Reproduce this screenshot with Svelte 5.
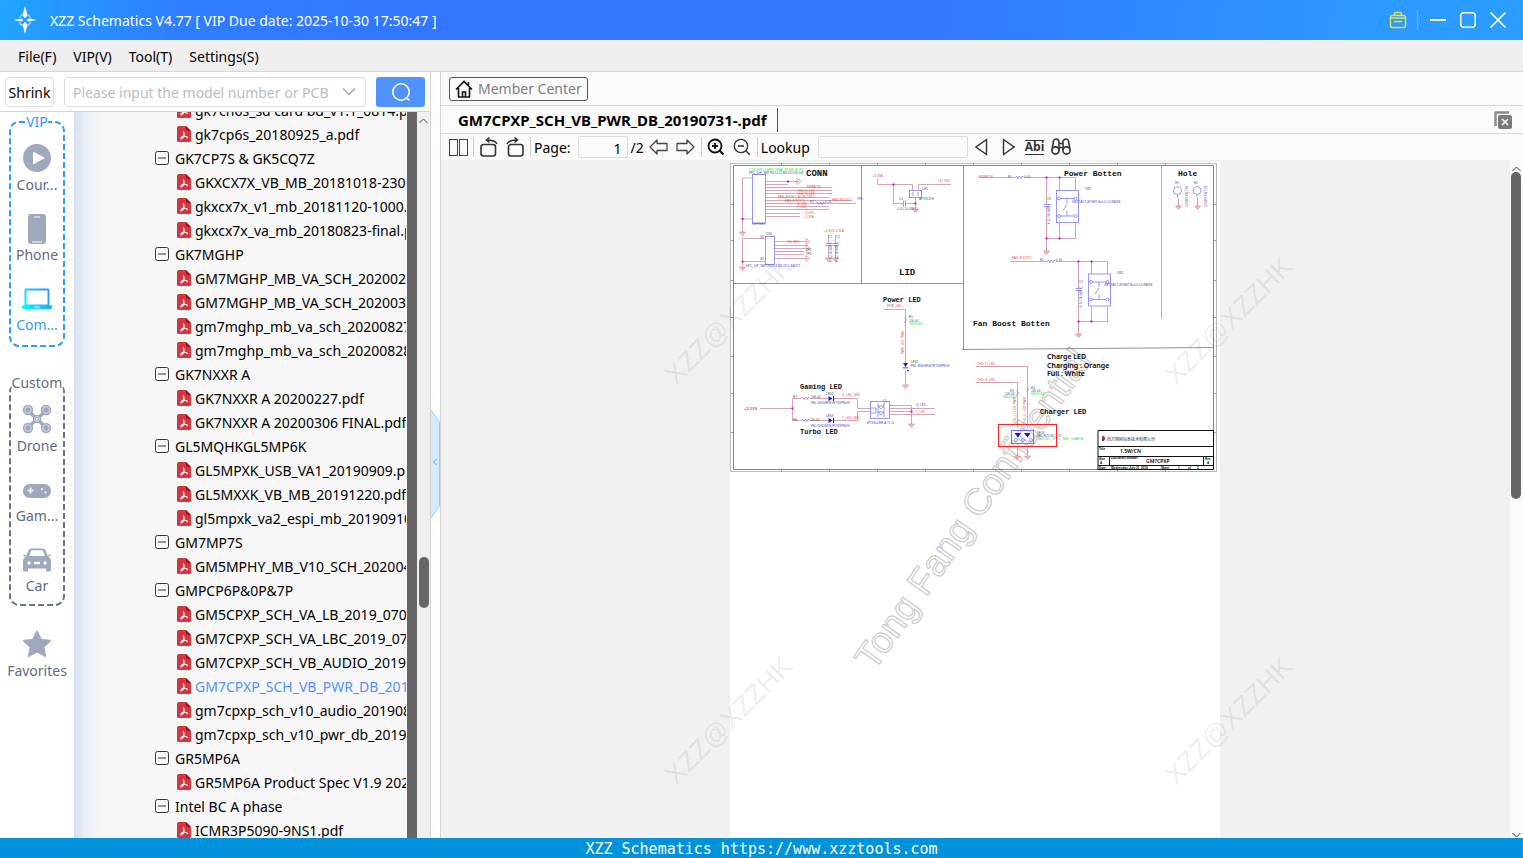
<script>
  const menus = ['File(F)', 'VIP(V)', 'Tool(T)', 'Settings(S)'];

  const tree = [
    { file: 'gk7cn6s_sd card bd_v1.1_0814.pdf' },
    { file: 'gk7cp6s_20180925_a.pdf' },
    { dir: 'GK7CP7S & GK5CQ7Z' },
    { file: 'GKXCX7X_VB_MB_20181018-230.pdf' },
    { file: 'gkxcx7x_v1_mb_20181120-1000.pdf' },
    { file: 'gkxcx7x_va_mb_20180823-final.pdf' },
    { dir: 'GK7MGHP' },
    { file: 'GM7MGHP_MB_VA_SCH_20200220.pdf' },
    { file: 'GM7MGHP_MB_VA_SCH_20200309.pdf' },
    { file: 'gm7mghp_mb_va_sch_20200827.pdf' },
    { file: 'gm7mghp_mb_va_sch_20200828.pdf' },
    { dir: 'GK7NXXR A' },
    { file: 'GK7NXXR A 20200227.pdf' },
    { file: 'GK7NXXR A 20200306 FINAL.pdf' },
    { dir: 'GL5MQHKGL5MP6K' },
    { file: 'GL5MPXK_USB_VA1_20190909.pdf' },
    { file: 'GL5MXXK_VB_MB_20191220.pdf' },
    { file: 'gl5mpxk_va2_espi_mb_20190910.pdf' },
    { dir: 'GM7MP7S' },
    { file: 'GM5MPHY_MB_V10_SCH_20200420.pdf' },
    { dir: 'GMPCP6P&0P&7P' },
    { file: 'GM5CPXP_SCH_VA_LB_2019_0704.pdf' },
    { file: 'GM7CPXP_SCH_VA_LBC_2019_0704.pdf' },
    { file: 'GM7CPXP_SCH_VB_AUDIO_20190731.pdf' },
    { file: 'GM7CPXP_SCH_VB_PWR_DB_20190731-.pdf', active: true },
    { file: 'gm7cpxp_sch_v10_audio_20190806.pdf' },
    { file: 'gm7cpxp_sch_v10_pwr_db_20190806.pdf' },
    { dir: 'GR5MP6A' },
    { file: 'GR5MP6A Product Spec V1.9 2020.pdf' },
    { dir: 'Intel BC A phase' },
    { file: 'ICMR3P5090-9NS1.pdf' }
  ];

  const groups = [
    { name: 'VIP', blue: true, items: [['Cour...', 'play'], ['Phone', 'phone'], ['Com...', 'laptop']] },
    { name: 'Custom', blue: false, items: [['Drone', 'drone'], ['Gam...', 'pad'], ['Car', 'car']] }
  ];

  const headings = [
    [806, 176, 9, 'CONN'], [899, 275, 9, 'LID'], [1064, 176, 8, 'Power Botten'], [1178, 176, 8, 'Hole'],
    [973, 326, 8, 'Fan Boost Botten'], [883, 302, 7, 'Power LED'], [800, 389, 7, 'Gaming LED'],
    [800, 434, 7, 'Turbo LED'], [1040, 414, 7, 'Charger LED']
  ];

  // [x, y, colour, text, rotated]
  const labels = [
    [749, 171, 'g', 'CON_FPC_10PIN_30MA_P100R_ACES'], [749, 174, 'b', 'FPC_DIP_SMT,P0.5,L10,N8-0110-H-003'],
    [807, 188, 'r', 'PWRBTN#'], [797, 192, 'r', 'CHG_O_LED'], [797, 195, 'r', 'CHG_G_LED'],
    [778, 198, 'r', 'FAN_BOOST_BLUE_LED#'], [785, 202, 'r', 'FAN_BOOST#'], [797, 205, 'r', 'G_LED'], [797, 208, 'r', 'T_LED'],
    [810, 203, 'b', 'R1'], [825, 203, 'b', '0-04'], [832, 201, 'r', 'FAN_BOOST#'], [857, 200, 'b', 'TP4'],
    [804, 214, 'r', '+3.3VS'], [804, 218, 'r', '+3.3VA'], [752, 225, 'b', 'CNPWR1'],
    [766, 235, 'b', 'CN2'], [760, 238, 'd', 'G1'], [760, 260, 'd', 'G2'], [787, 243, 'r', 'LID_SW#'], [806, 251, 'd', 'TP2'], [806, 255, 'd', 'TP3'],
    [746, 267, 'b', 'FPC_DIP_SMT,P0.5,L8,N8-0110-EAST2'],
    [824, 232, 'r', '+3.3VS+3.3VA'], [828, 238, 'b', 'C1'], [836, 238, 'b', 'C2'],
    [832, 262, 'b', '0.1U-10-04R-C', 1], [838, 262, 'b', '0.1U-10-04R-C', 1],
    [873, 177, 'r', '+3.3VA'], [938, 182, 'r', 'LID_SW#'], [922, 190, 'b', 'UH1'], [919, 200, 'b', 'APX9131H'],
    [899, 200, 'b', 'C4'], [897, 210, 'b', '0.1U-10-04R-C'],
    [979, 178, 'r', 'PWRBTN#'], [1008, 178, 'b', 'R1'], [1024, 178, 'b', '0-04'], [1085, 190, 'b', 'SW1'],
    [1047, 200, 'b', 'C8'], [1050, 224, 'b', '0.1U-10-04R-C', 1], [1072, 203, 'b', 'SMT,TACT,4P,SMT,H=0.5,LU,RAISE'],
    [1012, 259, 'r', 'FAN_BOOST#'], [1040, 261, 'b', 'R2'], [1056, 261, 'b', '0-04'], [1117, 274, 'b', 'SW2'],
    [1079, 283, 'b', 'C9'], [1082, 307, 'b', '0.1U-10-04R-C', 1], [1104, 286, 'b', 'SMT,TACT,4P,SMT,H=0.5,LU,RAISE'],
    [1175, 184, 'b', 'H1'], [1194, 184, 'b', 'H2'], [1188, 207, 'b', 'C3.0R6.0N-TH1', 1], [1207, 207, 'b', 'C3.0R6.0N-TH1', 1],
    [887, 307, 'r', 'PWR_LED'], [909, 318, 'b', 'R5'], [909, 322, 'b', '100-04'], [909, 325, 'g', 'NB@0402'],
    [904, 354, 'r', 'PWR_LED_PWR', 1], [911, 363, 'd', 'LED1'], [911, 367, 'b', 'FBL-N060HKM,RITSSPRDH'],
    [793, 398, 'd', 'R7'], [811, 398, 'd', '100-04'], [826, 395, 'd', 'LED2'], [842, 396, 'r', 'G_LED_GND'], [811, 404, 'b', 'FBL-N060HKM,RITSSPRDH'],
    [793, 421, 'd', 'R8'], [810, 421, 'd', '100-04'], [826, 417, 'd', 'LED3'], [842, 419, 'r', 'T_LED_GND'], [811, 427, 'b', 'FBL-N060HKM,RITSSPRDH'],
    [883, 402, 'b', 'Q1'], [867, 424, 'b', 'MTSS00MR-A T1-G'], [916, 406, 'b', 'G_LED'], [916, 413, 'r', 'T_LED'],
    [977, 365, 'r', 'CHG_O_LED'], [977, 381, 'r', 'CHG_G_LED'], [1010, 392, 'b', 'R3'], [1005, 395, 'b', '100-04'], [1003, 398, 'g', 'NB@0402'],
    [1031, 389, 'b', 'R4'], [1031, 392, 'b', '100-04'], [1031, 395, 'g', 'NB@0402'],
    [1016, 424, 'r', 'CHG_O_LED_PWR', 1], [1026, 424, 'r', 'CHG_G_LED_PWR', 1], [1037, 434, 'b', 'LED4'], [1037, 437, 'b', 'FBL-R2T/GK-DOT'],
    [1037, 440, 'g', 'NB@LED_TFULL_SMD_CHARGE']
  ];

  const redWires = 'M742.5 178H752M742.5 178V232M742.5 219H752M766 181.5H799M766 184.5H788M766 187.500H832M766 190.500H832M766 193.500H832M766 197.500H830M766 200.500H852M766 203.500H856M766 206.500H829M766 209.500H829M766 213.500H800M766 216.500H800M742.500 238.500H765M742.500 238.500V265M742.500 261.500H765M775 241.500H808M775 245.500H808M775 248.500H808M775 251.500H804M775 254.500H804M775 258.500H808M828.500 235V243M828.500 246V259M835.500 235V243M835.500 246V259M877.500 178V184.500H912.500V190M893.500 184.500V203.500H903M906 203.500H915.500M915.500 198V211M918.500 190V184.500H951M978 177.500H1015M1024 177.500H1075.500V190M1059.500 177.500V190M1046.500 177.500V204M1046.500 206V252M1059.500 223V238.500M1075.500 223V238.500M1046.500 238.500H1075.500M1010 261.500H1047M1056 261.500H1107.500V274M1091.500 261.500V274M1078.500 261.500V288M1078.500 290V334M1091.500 307V322M1107.500 307V322M1078.500 321.500H1107.500M1178.500 198V206M1197.500 198V206M884 309.500H905.500V363M905.500 370V386M760 408.500H792.500M801 398.500H792.500V420.500H801M810 398.500H828M833 398.500H857.500V408.500H870M810 420.500H828M833 420.500H857.500V411.500H870M890 405.500H911.500V424M890 408.500H935M890 411.500H911M890 414.500H935M976 366.500H1027.500V428M976 382.500H1017.500V428M1017.500 446V456M1027.500 446V456';
  const grounds = [[742.5, 232], [742.5, 267], [828.5, 258], [835.5, 258], [915.5, 209], [1046.5, 251], [1078.5, 334], [1178.5, 206], [1197.5, 206], [905.5, 385], [911.5, 424], [1017.5, 456], [1027.5, 456]];
  const sideGrounds = [[797, 181.5], [806, 241.5], [806, 248.5], [806, 258.5]];
  const resistors = [[816, 203.5], [1015, 177.500], [1047, 261.500], [801, 398.500], [801, 420.500]];
  const dots = [[742.5, 219], [788, 181.500], [893.500, 184.500], [915.500, 203.500], [742.500, 261.500], [1046.500, 177.500], [1059.500, 177.500], [1046.500, 238.500], [1059.500, 238.500], [1078.500, 261.500], [1091.500, 261.500], [1078.500, 321.500], [1091.500, 321.500], [792.500, 408.500], [911.500, 411.500]];
  const switches = [[1056, 190], [1088, 273.500]];
  const diodes = [[831, 398.500], [831, 420.500]];

  let query = $state('');
  let page = $state('1');
  let lookup = $state('');
</script>

<div class="app">
  <header class="titlebar">
    <svg class="logo" width="24" height="30" viewBox="0 0 24 30" aria-hidden="true">
      <circle cx="12" cy="15" r="6" fill="none" stroke="#8fd4ff" stroke-width="1.500" stroke-dasharray="5 4.400" stroke-dashoffset="-2" />
      <path d="M12 1l2.500 9.500-2.500 2.500-2.500-2.500zM12 29l2.500-9.500-2.500-2.500-2.500 2.500zM0 15l8.500-1.500L10.500 15l-2 1.500zM24 15l-8.500-1.500L13.500 15l2 1.500z" fill="#fff" />
    </svg>
    <h1>XZZ Schematics V4.77 [ VIP Due date: 2025-10-30 17:50:47 ]</h1>
    <div class="winbtns">
      <button aria-label="Toolbox"><svg width="18" height="18" viewBox="0 0 18 18" fill="none" stroke="#dfe24a" stroke-width="1.500"><rect x="1.500" y="4.500" width="15" height="12" rx="2" /><path d="M5.500 4.500V3q0-1.500 1.500-1.500h4q1.500 0 1.500 1.500v1.500M1.500 7h15" /><path d="M5 10.500h8" /></svg></button>
      <i></i>
      <button aria-label="Minimize"><svg width="18" height="18" viewBox="0 0 18 18" stroke="#fff" stroke-width="2"><path d="M1 9h16" /></svg></button>
      <button aria-label="Maximize"><svg width="18" height="18" viewBox="0 0 18 18" fill="none" stroke="#fff" stroke-width="1.500"><rect x="1.750" y="1.750" width="14.500" height="14.500" rx="3" /></svg></button>
      <button aria-label="Close"><svg width="18" height="18" viewBox="0 0 18 18" stroke="#fff" stroke-width="1.700"><path d="M1.500 1.500l15 15M16.500 1.500l-15 15" /></svg></button>
    </div>
  </header>

  <nav class="menubar">
    {#each menus as m}<button>{m}</button>{/each}
  </nav>

  <main>
    <section class="left">
      <div class="searchrow">
        <button class="shrink">Shrink</button>
        <div class="combo">
          <input aria-label="Model number" placeholder="Please input the model number or PCB" bind:value={query} />
          <svg width="14" height="9" viewBox="0 0 14 9" fill="none" stroke="#a8adb5" stroke-width="1.700"><path d="M1 1.500l6 6 6-6" /></svg>
        </div>
        <button class="go" aria-label="Search"><svg width="20" height="20" viewBox="0 0 20 20" fill="none" stroke="#fff" stroke-width="1.600"><circle cx="10" cy="10" r="8.200" /><path d="M15.500 15.500l3 3" /></svg></button>
      </div>
      <div class="body">
        <aside>
          {#each groups as g}
            <div class="group" class:blue={g.blue}>
              <svg class="frame" aria-hidden="true"><rect width="100%" height="100%" rx="9" /></svg>
              <span class="legend">{g.name}</span>
              {#each g.items as [label, icon]}
                <button class="cat" class:active={icon === 'laptop'}>
                  <svg width="30" height="46" viewBox="0 0 30 46" fill="#9fa8bd" aria-hidden="true">
                    {#if icon === 'play'}
                      <circle cx="15" cy="23" r="14" /><path d="M11 17.500q0-1 1-.5l10 5.500q1 .5 0 1l-10 5.500q-1 .5-1-.5z" fill="#fff" />
                    {:else if icon === 'phone'}
                      <rect x="6" y="9" width="18" height="30" rx="3" /><path d="M12.500 12h5M10.500 37h9" stroke="#fff" stroke-width="1" stroke-linecap="round" />
                    {:else if icon === 'laptop'}
                      <defs><linearGradient id="lap" x1="0" y1=".7" x2="1" y2=".3"><stop offset="0" stop-color="#00f6ff" /><stop offset=".85" stop-color="#2e9bff" /></linearGradient></defs>
                      <path fill="url(#lap)" fill-rule="evenodd" d="M2.500 15q0-1.500 1.500-1.500h22q1.500 0 1.500 1.500v15.500H30V32q0 2-2 2H2q-2 0-2-2v-1.500h2.500zM4.500 15.500v14h21v-14z" /><path d="M12.500 32h5" stroke="#fff" />
                    {:else if icon === 'drone'}
                      <path d="M8 13.500l5 5.500h4l5-5.500 3 3-6 5v3l6 5-3 3-5-5.500h-4l-5 5.500-3-3 6-5v-3l-6-5z" />
                      <circle cx="6" cy="14" r="5.200" /><circle cx="24" cy="14" r="5.200" /><circle cx="6" cy="32" r="5.200" /><circle cx="24" cy="32" r="5.200" />
                      <g fill="none" stroke="#e4e7ee" stroke-width=".800"><circle cx="6" cy="14" r="3.300" /><circle cx="24" cy="14" r="3.300" /><circle cx="6" cy="32" r="3.300" /><circle cx="24" cy="32" r="3.300" /><circle cx="15" cy="23" r="2.500" /></g>
                      <circle cx="15" cy="23" r="1" fill="#fff" />
                    {:else if icon === 'pad'}
                      <rect x="1" y="18" width="28" height="14" rx="6.500" /><path d="M5.500 24.500h6M8.500 21.500v6" stroke="#fff" stroke-width="1.600" /><circle cx="20" cy="23" r="1" fill="#fff" /><circle cx="23.500" cy="26.500" r="1" fill="#fff" />
                    {:else}
                      <path fill-rule="evenodd" d="M4 20.500L6.500 14Q7.500 12.500 9 12.500h12q1.500 0 2.500 1.500l2.500 6.500q3 1.500 3 4V34q0 1.500-1.500 1.500H25q-1 0-1-1.500v-1.500H6V34q0 1.500-1 1.500H2.500Q1 35.500 1 34v-9.500q0-2.500 3-4zM7 20h16l-2-5q-.3-.8-1.200-.8h-9.600q-.9 0-1.200.8zM1 18.500l3 .5-.5 1.500H2zM29 18.500l-3 .5.500 1.500H28z" />
                      <circle cx="7" cy="27" r="1.700" fill="#fff" /><circle cx="23" cy="27" r="1.700" fill="#fff" /><path d="M12 27h6" stroke="#fff" stroke-width="2.500" />
                    {/if}
                  </svg>
                  <span>{label}</span>
                </button>
              {/each}
            </div>
          {/each}
          <button class="cat fav">
            <svg width="30" height="46" viewBox="0 0 30 46" fill="#9fa8bd" stroke="#9fa8bd" stroke-width="2" stroke-linejoin="round" aria-hidden="true"><path d="M15 10.500l3.700 8.200 9.300 1-6.800 6.200 2 9.100-8.200-4.600L6.800 35l2-9.100L2 19.700l9.300-1z" /></svg>
            <span>Favorites</span>
          </button>
        </aside>
        <ul class="tree">
          {#each tree as n}
            {#if n.dir}
              <li class="dir"><svg width="14" height="14" viewBox="0 0 14 14" fill="none" stroke="#333"><rect x=".5" y=".5" width="13" height="13" rx="2" /><path d="M3 7h8" /></svg><span>{n.dir}</span></li>
            {:else}
              <li class:active={n.active}><svg width="14" height="16" viewBox="0 0 14 16"><path d="M1.500 0H9l5 5v9.500q0 1.500-1.500 1.500h-11Q0 16 0 14.500v-13Q0 0 1.500 0z" fill="#d2363f" /><path d="M9 0l5 5h-4q-1 0-1-1z" fill="#8c1a20" /><path d="M6.500 5.500q1 3 .5 4.500t-3 3M7 10q2 .3 3.500 1.500M6.800 9.500Q5 11 4 11.800" fill="none" stroke="#fff" stroke-width="1.100" stroke-linecap="round" /></svg><span>{n.file}</span></li>
            {/if}
          {/each}
        </ul>
        <div class="darkbar"></div>
        <div class="sb leftsb"><svg width="9" height="6" viewBox="0 0 9 6" fill="none" stroke="#444"><path d="M.5 5l4-4 4 4" /></svg><div class="thumb"></div></div>
      </div>
    </section>

    <div class="splitter">
      <button aria-label="Collapse panel"><svg width="9" height="110" viewBox="0 0 9 110"><path d="M0 1l8.500 12v84L0 109" fill="#d6eafd" stroke="#93cbff" /><path d="M5.500 50l-3 3 3 3" fill="none" stroke="#4ea6ee" /></svg></button>
    </div>

    <section class="right">
      <div class="memberrow">
        <button class="member"><svg width="18" height="18" viewBox="0 0 18 18" fill="none" stroke="#111" stroke-width="1.600"><path d="M1 9.500L9 1.500l8 8M3.500 8v9h11V8M7.500 17v-5h3v5M13.500 5V2" /></svg>Member Center</button>
      </div>
      <div class="tabs">
        <button class="tab">GM7CPXP_SCH_VB_PWR_DB_20190731-.pdf</button>
        <button class="closeall" aria-label="Close all"><svg width="18" height="18" viewBox="0 0 18 18"><path d="M1.500 15V1.500H15" fill="none" stroke="#8a8a8a" stroke-width="2.400" stroke-linejoin="round" /><rect x="4" y="4" width="14" height="14" rx="2" fill="#7b7b7b" /><path d="M8 8l6 6M14 8l-6 6" stroke="#fff" stroke-width="1.600" /></svg></button>
      </div>
      <div class="tools">
        <button aria-label="Two pages"><svg width="20" height="18" viewBox="0 0 20 18" fill="none" stroke="#444"><rect x=".5" y="1.500" width="8" height="16" /><rect x="10.500" y="1.500" width="8" height="16" /></svg></button>
        <i></i>
        <button class="rot" aria-label="Rotate left"><svg width="18" height="20" viewBox="0 0 18 20" fill="none" stroke="#333" stroke-width="1.600"><rect x="1" y="7.500" width="14.500" height="11.500" rx="2.500" /><path d="M17 7Q15 3 7 3M9.500 .5L6.500 3l3 2.500" /></svg></button>
        <button class="wide" aria-label="Rotate right"><svg width="18" height="20" viewBox="0 0 18 20" fill="none" stroke="#333" stroke-width="1.600"><rect x="2.500" y="7.500" width="14.500" height="11.500" rx="2.500" /><path d="M1 7Q3 3 11 3M8.500 .5l3 2.500-3 2.500" /></svg></button>
        <i></i>
        <label for="pg">Page:</label>
        <input id="pg" class="pg" bind:value={page} />
        <span class="of">/2</span>
        <button aria-label="Previous page"><svg width="19" height="18" viewBox="0 0 19 18" fill="none" stroke="#444" stroke-width="1.300"><path d="M1 9l7-7v3.500h10v7H8V16z" stroke-linejoin="round" /></svg></button>
        <button class="pad" aria-label="Next page"><svg width="19" height="18" viewBox="0 0 19 18" fill="none" stroke="#444" stroke-width="1.300"><path d="M18 9l-7-7v3.500H1v7h10V16z" stroke-linejoin="round" /></svg></button>
        <i></i>
        <button aria-label="Zoom in"><svg width="18" height="18" viewBox="0 0 18 18" fill="none" stroke="#111" stroke-width="1.800"><circle cx="8" cy="8" r="6.500" /><path d="M12.500 12.500l4 4" stroke-width="2.200" /><path d="M5 8h6M8 5v6" /></svg></button>
        <button class="pad" aria-label="Zoom out"><svg width="18" height="18" viewBox="0 0 18 18" fill="none" stroke="#333" stroke-width="1.300"><circle cx="8" cy="8" r="6.700" /><path d="M12.800 12.800l4 4M5 8h6" /></svg></button>
        <i></i>
        <label for="lk">Lookup</label>
        <input id="lk" class="lk" bind:value={lookup} />
        <button aria-label="Find previous"><svg width="13" height="18" viewBox="0 0 13 18" fill="none" stroke="#333" stroke-width="1.400"><path d="M11.500 1.500v15L1 9z" /></svg></button>
        <button class="next" aria-label="Find next"><svg width="13" height="18" viewBox="0 0 13 18" fill="none" stroke="#333" stroke-width="1.400"><path d="M1.500 1.500v15L12 9z" /></svg></button>
        <button class="abi">Abi</button>
        <button aria-label="Find"><svg width="20" height="18" viewBox="0 0 20 18" fill="none" stroke="#333" stroke-width="1.600"><path d="M1 12L2.500 3Q3 1 5 1t3 2v9M19 12L17.500 3Q17 1 15 1t-3 2v9M8 5.500h4M8 9.500h4" /><circle cx="4.500" cy="12.500" r="3.600" /><circle cx="15.500" cy="12.500" r="3.600" /></svg></button>
      </div>
      <div class="viewer">
        <div class="canvas">
          <div class="sheet">
            <svg class="sch" viewBox="730 162 490 312">
              <text class="tong" transform="translate(874 672) rotate(-55)">Tong Fang Confidential</text>
              <g fill="none" stroke="#888" stroke-width=".800">
                <path d="M730.500 163.500H1216.500V471.500H730.500z" stroke="#aaa" />
                <path d="M733.500 165.500H1213.500V469.500H733.500z" stroke="#666" />
                <path d="M781.500 163v2M829.500 163v2M877.500 163v2M925.500 163v2M973.500 163v2M1021.500 163v2M1069.500 163v2M1117.500 163v2M1165.500 163v2M781.500 470v2M829.500 470v2M877.500 470v2M925.500 470v2M973.500 470v2M1021.500 470v2M1069.500 470v2M1117.500 470v2M1165.500 470v2M731 204.500h2M731 240.500h2M731 280.500h2M731 317.500h2M731 356.500h2M731 393.500h2M731 432.500h2M1214 204.500h2M1214 240.500h2M1214 280.500h2M1214 317.500h2M1214 356.500h2M1214 393.500h2M1214 432.500h2" />
                <path d="M861.500 166V283.500M733 283.500H963.500M963.500 166V349.500M962 349.500L1213 347.500" stroke="#777" />
                <path d="M1161.500 166V318.500" stroke="#999" />
              </g>
              <g fill="none" stroke="#c77f92" stroke-width=".700">
                <path d={redWires} />
                {#each grounds as [x, y]}<path stroke="#f08080" fill="#fbb" d="M{x - 3} {y}h6l-3 3.500z" />{/each}
                {#each sideGrounds as [x, y]}<path stroke="#f08080" d="M{x} {y - 3}v6l4-3z" />{/each}
              </g>
              <g fill="none" stroke="#7d7df0" stroke-width=".800">
                {#each resistors as [x, y]}<path d="M{x} {y}l1.500-1.500 1.500 2.500 1.500-2.500 1.500 2.500 1.500-2.500 1.500 1.500" />{/each}
                <rect x="752.500" y="174.500" width="13" height="49" /><rect x="765.500" y="236.500" width="9" height="28" />
                <path d="M825.500 243.500h6M825.500 245.500h6M832.500 243.500h6M832.500 245.500h6M903.500 200.500v6M905.500 200.500v6M1043.500 204.500h6M1043.500 206.500h6M1075.500 288.500h6M1075.500 290.500h6" />
                <rect x="909.500" y="190.500" width="12" height="7" /><path d="M913 192v4M918 192v4" />
                {#each switches as [x, y]}
                  <rect x={x + .5} y={y + .5} width="22" height="32" />
                  <circle cx={x + 3} cy={y + 8.500} r="1.500" /><circle cx={x + 19.500} cy={y + 8.500} r="1.500" /><circle cx={x + 3} cy={y + 26} r="1.500" /><circle cx={x + 19.500} cy={y + 26} r="1.500" />
                  <path d="M{x + 4.500} {y + 8.500}h13.500M{x + 4.500} {y + 26}h13.500M{x + 11} {y + 8.500}v5M{x + 11} {y + 14.500}l-4 6M{x + 11} {y + 26}v-5" />
                {/each}
                <circle cx="1177.500" cy="190.500" r="4" /><circle cx="1197" cy="190.500" r="4" /><path d="M1177.500 194.500v3M1197 194.500v3" />
                <rect x="870.500" y="401.500" width="19" height="17" /><path d="M878 403v14M884 403v14M878 406h6l-3 3zM878 412h6l-3 3zM871 408h5v5h-5" />
                <rect x="1011.500" y="430.500" width="22" height="13" stroke="#55f" /><circle cx="1016" cy="440" r="1.500" /><circle cx="1023" cy="440" r="1.500" /><circle cx="1031" cy="440" r="1.500" />
                <path d="M904.500 318l2 1.500-2 2.500 1 1.500M1016.500 391l2 1.500-2 2.500M1026.500 388l2 1.500-2 2.500" />
              </g>
              <g fill="#11f">
                {#each diodes as [x, y]}<path d="M{x - 2.500} {y - 2.500}v5l4-2.500zM{x + 2} {y - 2.500}h1v5h-1z" />{/each}
                <path d="M903 363h5l-2.500 4zM903 367.500h5v.8h-5zM1014.500 433h6.500l-3 4.500zM1024 433h6.500l-3 4.500zM907 370h2l-1 2z" />
              </g>
              {#each dots as [x, y]}<rect x={x - 1} y={y - 1} width="2" height="2" fill="#e0c" />{/each}
              {#each labels as [x, y, c, t, rot]}
                <text class="lbl {c}" transform={rot ? `translate(${x} ${y}) rotate(-90)` : `translate(${x} ${y})`}>{t}</text>
              {/each}
              <text class="lbl r big" x="744" y="410">+3.3VS</text>
              {#each headings as [x, y, s, t]}<text class="head" {x} {y} font-size={s}>{t}</text>{/each}
              <g class="note"><text x="1047" y="359">Charge LED</text><text x="1047" y="368">Charging : Orange</text><text x="1047" y="376">Full : White</text></g>
              <rect x="998.500" y="424.500" width="58" height="22" fill="none" stroke="#f22" />
              <g fill="none" stroke="#111"><path d="M1098 430.500h115.500V469.500H1098z" /><path d="M1098 446.500h115M1098 456.500h115M1098 465.500h115M1109.500 456.500v9M1203.500 456.500v9" /></g>
              <path d="M1102 436.500l2-1 1.500 4-3.500 1z" fill="#c33" /><path d="M1103 438q1.500 0 1 3h-2z" fill="#249" />
              <text class="cn" x="1107" y="441">同方国际信息技术有限公司</text>
              <g class="tb"><text x="1120" y="453">1.5W/CN</text><text x="1146" y="463">GM7CPXP</text></g>
              <g class="tiny"><text x="1099" y="450">Title</text><text x="1099" y="460">Size</text><text x="1100" y="464">A</text><text x="1111" y="459">Document Number</text><text x="1205" y="460">Rev</text><text x="1207" y="464">A</text><text x="1099" y="469">Date:</text><text x="1111" y="469">Wednesday, July 31, 2019</text><text x="1161" y="469">Sheet</text><text x="1178" y="469">1</text><text x="1188" y="469">of</text><text x="1197" y="469">2</text></g>
            </svg>
          </div>
          <svg class="wm" viewBox="441 160 1069 678" aria-hidden="true">
            {#each [[735, 327], [1235, 327], [735, 727], [1235, 727]] as [x, y]}<text transform="translate({x} {y}) rotate(-45)">XZZ@XZZHK</text>{/each}
          </svg>
        </div>
        <div class="sb rightsb"><svg width="9" height="6" viewBox="0 0 9 6" fill="none" stroke="#444"><path d="M.5 5l4-4 4 4" /></svg><div class="thumb"></div><svg class="down" width="9" height="6" viewBox="0 0 9 6" fill="none" stroke="#444"><path d="M.5 1l4 4 4-4" /></svg></div>
      </div>
    </section>
  </main>

  <footer>XZZ Schematics https://www.xzztools.com</footer>
</div>

<style>
  :global(body) { margin: 0; }
  .app { height: 100vh; display: flex; flex-direction: column; overflow: hidden; font: 14px/20px "Noto Sans", "Noto Sans CJK SC", sans-serif; color: #000; background: #fff; }
  button { border: 0; background: none; padding: 0; margin: 0; font: inherit; color: inherit; display: flex; align-items: center; justify-content: center; flex: none; }
  input { font: inherit; box-sizing: border-box; outline: none; min-width: 0; }
  svg { display: block; flex: none; }

  .titlebar { flex: none; height: 40px; display: flex; align-items: center; padding: 0 16px 0 13px; color: #fff; background: linear-gradient(100deg, #20a5ff 0, #2f7dff 12%, #3376ff 30%, #3376ff 60%, #2d98ff 88%, #2b9eff 100%); }
  h1 { flex: 1; margin: 0 0 0 13px; padding-top: 2px; font-size: 14px; font-weight: 400; line-height: 20px; }
  .winbtns { display: flex; align-items: center; gap: 12px; }
  .winbtns i { width: 1px; height: 20px; background: #79bdff; margin: 0 -1px 0 -2px; }

  .menubar { flex: none; box-sizing: border-box; height: 32px; display: flex; align-items: center; gap: 17px; padding: 2px 0 0 18px; background: #efefef; border-bottom: 1px solid #d6d6d6; }
  main { flex: 1; min-height: 0; display: flex; }

  .left { flex: none; width: 430px; display: flex; flex-direction: column; border-right: 1px solid #d4d4d4; }
  .searchrow { flex: none; height: 39px; display: flex; align-items: center; padding: 0 5px; border-bottom: 1px solid #d4d4d4; }
  .shrink { width: 49px; height: 30px; box-sizing: border-box; padding-top: 2px; border: 1px solid #dcdcdc; border-radius: 4px; }
  .combo { flex: 1; height: 30px; box-sizing: border-box; display: flex; align-items: center; margin: 0 10px; padding: 0 9px 0 8px; border: 1px solid #dcdcdc; border-radius: 4px; gap: 8px; }
  .combo input { flex: 1; border: 0; padding: 2px 0 0; background: none; }
  .combo input::placeholder { color: #b9bcc2; opacity: 1; }
  .go { width: 49px; height: 30px; border-radius: 3px; background: #5093ff; }
  .body { flex: 1; min-height: 0; display: flex; }

  aside { flex: none; width: 74px; box-sizing: border-box; padding: 10px 9px 0; background: #fff; }
  .group { position: relative; padding-top: 13px; margin-bottom: 36px; color: #5f6b82; }
  .group.blue { padding-bottom: 2px; }
  .frame { position: absolute; top: 0; left: 1px; width: calc(100% - 2px); height: calc(100% - 1px); overflow: visible; }
  .frame rect { fill: none; stroke: #67738a; stroke-width: 2; stroke-dasharray: 6 3; }
  .blue .frame rect { stroke: #2e9bff; }
  .legend { position: absolute; top: -10px; left: 50%; transform: translateX(-50%); background: #fff; line-height: 20px; height: 20px; }
  .blue .legend { color: #2e9bff; }
  .cat { position: relative; width: 100%; height: 70px; flex-direction: column; justify-content: flex-start; color: #5f6b82; }
  .cat svg { margin-bottom: -6px; }
  .cat.active { color: #2e9bff; }
  .fav { margin-top: -21px; }

  .tree { flex: 1; min-width: 0; margin: 0; padding: 0 1px 0 81px; list-style: none; overflow: hidden; background: linear-gradient(90deg, #d6e0f1 0, #eaeef6 10px, #f7f7f7 30px); }
  li { height: 24px; display: flex; align-items: center; padding-left: 22px; gap: 4px; white-space: nowrap; overflow: hidden; }
  li span { padding-top: 2px; }
  li:first-child { margin-top: -14px; }
  li.dir { padding-left: 0; gap: 6px; }
  li.active { color: #5093ff; }
  .darkbar { flex: none; width: 10px; background: #666; }
  .sb { position: relative; flex: none; width: 13px; background: #efefef; display: flex; flex-direction: column; align-items: center; justify-content: space-between; box-sizing: border-box; padding: 6px 0 0; }
  .thumb { position: absolute; width: 10px; border-radius: 5px; background: #666; left: 2px; }
  .leftsb .thumb { top: calc(61% + 2px); height: 7%; }
  .rightsb { background: #fafafa; }
  .rightsb .thumb { top: 12px; left: 1px; height: calc(48% + 2px); }

  .splitter { flex: none; width: 9px; background: #fafff8; border-right: 1px solid #d4d4d4; display: flex; flex-direction: column; justify-content: center; }
  .splitter button { margin-top: 18px; }

  .right { flex: 1; min-width: 0; display: flex; flex-direction: column; background: #fafafa; }
  .memberrow { flex: none; height: 33px; display: flex; align-items: center; padding-left: 8px; border-bottom: 1px solid #d9d9d9; }
  .member { height: 24px; box-sizing: border-box; border: 1px solid #555; border-radius: 3px; padding: 0 5px; gap: 5px; color: #808080; }
  .tabs { flex: none; height: 27px; display: flex; align-items: center; justify-content: space-between; padding: 0 11px 0 8px; border-bottom: 1px solid #d9d9d9; }
  .tab { height: 24px; padding: 0 10px 0 9px; font-size: 15px; font-weight: 700; border-right: 1px solid #555; }
  .tools { flex: none; height: 26px; display: flex; align-items: center; padding-left: 8px; }
  .tools i { width: 1px; height: 20px; background: #ccc; margin: 0 5px 0 4px; }
  .tools .rot { margin-left: 1px; }
  .tools .wide { margin-left: 8px; margin-right: 2px; }
  .tools input { height: 22px; border: 1px solid #dcdcdc; border-radius: 2px; background: #fafafa; padding: 2px 5px 0; }
  .tools .pad { margin: 0 2px 0 8px; }
  .tools label { margin-left: -2px; padding-top: 2px; }
  .pg { width: 50px; margin: 0 3px 0 7px; text-align: right; }
  .of { margin-right: 5px; padding-top: 2px; }
  .lk { width: 150px; margin: 0 7px 0 8px; }
  .next { margin: 0 10px 0 14px; }
  .abi { font: 700 12px/12px "Open Sans", sans-serif; color: #333; border-top: 1px solid #333; border-bottom: 1px solid #333; margin-right: 7px; height: 15px; }

  .viewer { flex: 1; min-height: 0; display: flex; }
  .canvas { position: relative; flex: 1; min-width: 0; overflow: hidden; background: #f1f1f1; display: flex; justify-content: center; padding: 2px 1px 0 0; }
  .sheet { width: 490px; background: #fff; }
  .sch { width: 100%; overflow: visible; }
  .wm { position: absolute; top: 0; left: 0; width: 100%; overflow: visible; }
  .wm text { font: 27px "Liberation Sans", sans-serif; text-anchor: middle; fill: #000; fill-opacity: .085; }
  .lbl { font: 3px "Liberation Sans", sans-serif; }
  .lbl.big { font-size: 4px; font-weight: 700; }
  .r { fill: #f04a4a; }
  .b { fill: #4a4ab8; }
  .g { fill: #35e035; }
  .d { fill: #444; }
  .head { font-family: "Liberation Mono", monospace; font-weight: 700; fill: #111; }
  .note { font: 600 7px "Noto Sans", sans-serif; }
  .cn { font: 4px "Noto Sans CJK SC", sans-serif; fill: #222; }
  .tb { font: 600 5px "Noto Sans", sans-serif; }
  .tiny { font: 700 3px "Liberation Sans", sans-serif; }
  .tong { font: 37px "Liberation Sans", sans-serif; fill: none; stroke: #ccc; stroke-width: 1.200px; }

  footer { flex: none; height: 20px; box-sizing: border-box; padding-top: 2px; display: flex; align-items: center; justify-content: center; background: #0092da; color: #fff; font: 15px/18px "DejaVu Sans Mono", monospace; }
</style>
